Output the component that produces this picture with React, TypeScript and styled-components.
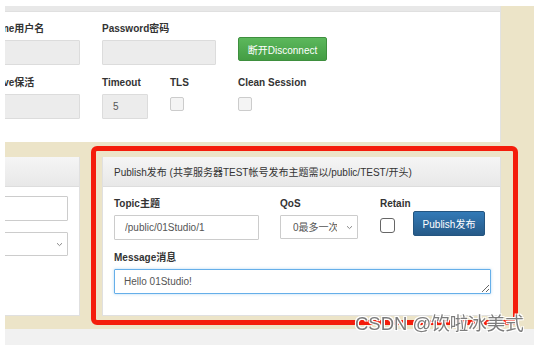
import styled, { createGlobalStyle } from "styled-components";

const GlobalStyle = createGlobalStyle`
  html, body {
    margin: 0;
    background: #fff;
  }
  body {
    font-family: "Liberation Sans", Arial, "Noto Sans CJK SC", sans-serif;
    color: #333;
  }
  * {
    box-sizing: border-box;
  }
`;

const Page = styled.div`
  position: relative;
  width: 541px;
  height: 345px;
  padding: 6px 0 0 5px;
  overflow: hidden;
`;

const Stage = styled.div`
  width: 529px;
  background-color: #ece4c8;
  padding-bottom: 13px;
  overflow: hidden;
`;

const Footer = styled.div`
  width: 529px;
  height: 17px;
  background-color: #f1f1f1;
`;

const TopPanel = styled.div`
  width: 496px;
  height: 136px;
  background-color: #fff;
  border-right: 1px solid #e2e2e2;
  overflow: hidden;
`;

const HeadingTail = styled.div`
  height: 6px;
  background-color: #e8e8e8;
  border-bottom: 1px solid #e0e0e0;
`;

const TopForm = styled.div`
  display: grid;
  grid-template-columns: repeat(8, 46px);
  column-gap: 22px;
  row-gap: 12px;
  margin-left: -39px;
  padding-top: 11px;
`;

const Field = styled.div<{ span?: number; newRow?: boolean }>`
  display: flex;
  flex-direction: column;
  gap: 5px;
  grid-column: ${(p) => (p.newRow ? "1 / " : "")}span ${(p) => p.span ?? 1};
`;

const Label = styled.label`
  font-size: 10px;
  font-weight: bold;
  line-height: 12px;
  color: #333;
  white-space: nowrap;
`;

const TextInput = styled.input<{ muted?: boolean }>`
  width: 100%;
  height: 25px;
  padding: 0 10px;
  font-family: inherit;
  font-size: 10px;
  color: #555;
  background-color: ${(p) => (p.muted ? "#ececec" : "#fff")};
  border: 1px solid ${(p) => (p.muted ? "#dcdcdc" : "#ccc")};
  border-radius: 1px;
  outline: none;
`;

const GreenButton = styled.button`
  grid-column: span 2;
  justify-self: start;
  margin-top: 14px;
  width: 89px;
  height: 24px;
  padding: 0;
  font-family: inherit;
  font-size: 10px;
  color: #fff;
  background-image: linear-gradient(#5cb85c, #449d44);
  border: 1px solid #3e8f3e;
  border-radius: 2px;
`;

const Check = styled.input.attrs({ type: "checkbox" })<{ strong?: boolean }>`
  appearance: none;
  margin: 3px 0 0;
  width: ${(p) => (p.strong ? 15 : 14)}px;
  height: ${(p) => (p.strong ? 15 : 14)}px;
  background-color: ${(p) => (p.strong ? "#fff" : "#f4f4f4")};
  border: ${(p) => (p.strong ? "1.5px solid #666" : "1px solid #ccc")};
  border-radius: ${(p) => (p.strong ? 3 : 2)}px;
`;

const BottomRow = styled.div`
  display: flex;
  gap: 22px;
  margin-top: 15px;
`;

const Panel = styled.div<{ width: number; offset?: number }>`
  width: ${(p) => p.width}px;
  margin-left: ${(p) => p.offset ?? 0}px;
  flex-shrink: 0;
  background-color: #fff;
  border: 1px solid #e0e0e0;
  border-top: none;
`;

const Heading = styled.div`
  height: 30px;
  display: flex;
  align-items: center;
  padding: 0 11px;
  font-size: 10px;
  color: #333;
  white-space: nowrap;
  background-image: linear-gradient(#f5f5f5, #e8e8e8);
  border-bottom: 1px solid #ddd;
`;

const LeftBody = styled.div`
  display: flex;
  flex-direction: column;
  gap: 11px;
  height: 128px;
  padding: 9px 11px 0 0;
`;

const SelectBox = styled.div<{ width?: number }>`
  position: relative;
  width: ${(p) => (p.width ? `${p.width}px` : "100%")};
  height: 24px;
`;

const Select = styled.select`
  appearance: none;
  width: 100%;
  height: 100%;
  padding: 0 20px 0 12px;
  font-family: inherit;
  font-size: 10px;
  color: #555;
  background-color: #fff;
  border: 1px solid #ccc;
  border-radius: 1px;
  outline: none;
`;

const Chevron = styled.svg`
  position: absolute;
  right: 5px;
  top: 10px;
  width: 7px;
  height: 5px;
  pointer-events: none;
`;

const PublishBody = styled.div`
  display: flex;
  flex-direction: column;
  gap: 12px;
  padding: 11px 11px 21px 11px;
`;

const PublishRow = styled.div`
  display: flex;
  align-items: flex-start;
`;

const Col = styled.div<{ width: number; gapAfter?: number }>`
  display: flex;
  flex-direction: column;
  gap: 5px;
  width: ${(p) => p.width}px;
  margin-right: ${(p) => p.gapAfter ?? 0}px;
`;

const BlueButton = styled.button`
  margin-top: 13px;
  width: 72px;
  height: 25px;
  padding: 0;
  font-family: inherit;
  font-size: 10px;
  color: #fff;
  background-image: linear-gradient(#337ab7, #265a88);
  border: 1px solid #245580;
  border-radius: 2px;
`;

const MessageArea = styled.textarea`
  width: 377px;
  height: 25px;
  padding: 6px 9px;
  font-family: inherit;
  font-size: 10px;
  line-height: 12px;
  color: #555;
  border: 1px solid #66afe9;
  border-radius: 1px;
  box-shadow: 0 0 3px rgba(102, 175, 233, 0.5);
  outline: none;
`;

const Annotation = styled.div`
  position: absolute;
  left: 91px;
  top: 146px;
  width: 427px;
  height: 179px;
  border: 5px solid #f41d0b;
  border-radius: 6px;
  pointer-events: none;
`;

const Watermark = styled.div`
  position: absolute;
  left: 355px;
  top: 313px;
  font-family: "Liberation Sans", Arial, "Noto Sans CJK SC", sans-serif;
  font-size: 18.5px;
  line-height: 22px;
  color: #7c7c7c;
  white-space: nowrap;
  text-shadow: 0 0 1px #fff, 1px 1px 0 #fff, -1px -1px 0 #fff, 1px -1px 0 #fff,
    -1px 1px 0 #fff;
`;

function ChevronIcon() {
  return (
    <Chevron viewBox="0 0 7 5">
      <path d="M1 1.2 L3.5 3.6 L6 1.2" fill="none" stroke="#888" strokeWidth="1" />
    </Chevron>
  );
}

export default function App() {
  return (
    <>
      <GlobalStyle />
      <Page>
        <Stage>
          <TopPanel>
            <HeadingTail />
            <TopForm>
              <Field span={2}>
                <Label>Username用户名</Label>
                <TextInput muted readOnly />
              </Field>
              <Field span={2}>
                <Label>Password密码</Label>
                <TextInput muted readOnly />
              </Field>
              <GreenButton>断开Disconnect</GreenButton>
              <Field span={2} newRow>
                <Label>KeepAlive保活</Label>
                <TextInput muted readOnly />
              </Field>
              <Field>
                <Label>Timeout</Label>
                <TextInput muted readOnly value="5" />
              </Field>
              <Field>
                <Label>TLS</Label>
                <Check />
              </Field>
              <Field span={2}>
                <Label>Clean Session</Label>
                <Check />
              </Field>
            </TopForm>
          </TopPanel>

          <BottomRow>
            <Panel width={175} offset={-100}>
              <Heading />
              <LeftBody>
                <TextInput readOnly />
                <SelectBox>
                  <Select>
                    <option></option>
                  </Select>
                  <ChevronIcon />
                </SelectBox>
              </LeftBody>
            </Panel>

            <Panel width={399}>
              <Heading>Publish发布 (共享服务器TEST帐号发布主题需以/public/TEST/开头)</Heading>
              <PublishBody>
                <PublishRow>
                  <Col width={145} gapAfter={21}>
                    <Label>Topic主题</Label>
                    <TextInput readOnly value="/public/01Studio/1" />
                  </Col>
                  <Col width={78} gapAfter={22}>
                    <Label>QoS</Label>
                    <SelectBox width={78}>
                      <Select defaultValue="0">
                        <option value="0">0最多一次</option>
                        <option value="1">1至少一次</option>
                        <option value="2">2只有一次</option>
                      </Select>
                      <ChevronIcon />
                    </SelectBox>
                  </Col>
                  <Col width={33}>
                    <Label>Retain</Label>
                    <Check strong />
                  </Col>
                  <BlueButton>Publish发布</BlueButton>
                </PublishRow>
                <Col width={377}>
                  <Label>Message消息</Label>
                  <MessageArea readOnly value="Hello 01Studio!" />
                </Col>
              </PublishBody>
            </Panel>
          </BottomRow>
        </Stage>
        <Footer />
        <Annotation />
        <Watermark>CSDN @饮啦冰美式</Watermark>
      </Page>
    </>
  );
}
